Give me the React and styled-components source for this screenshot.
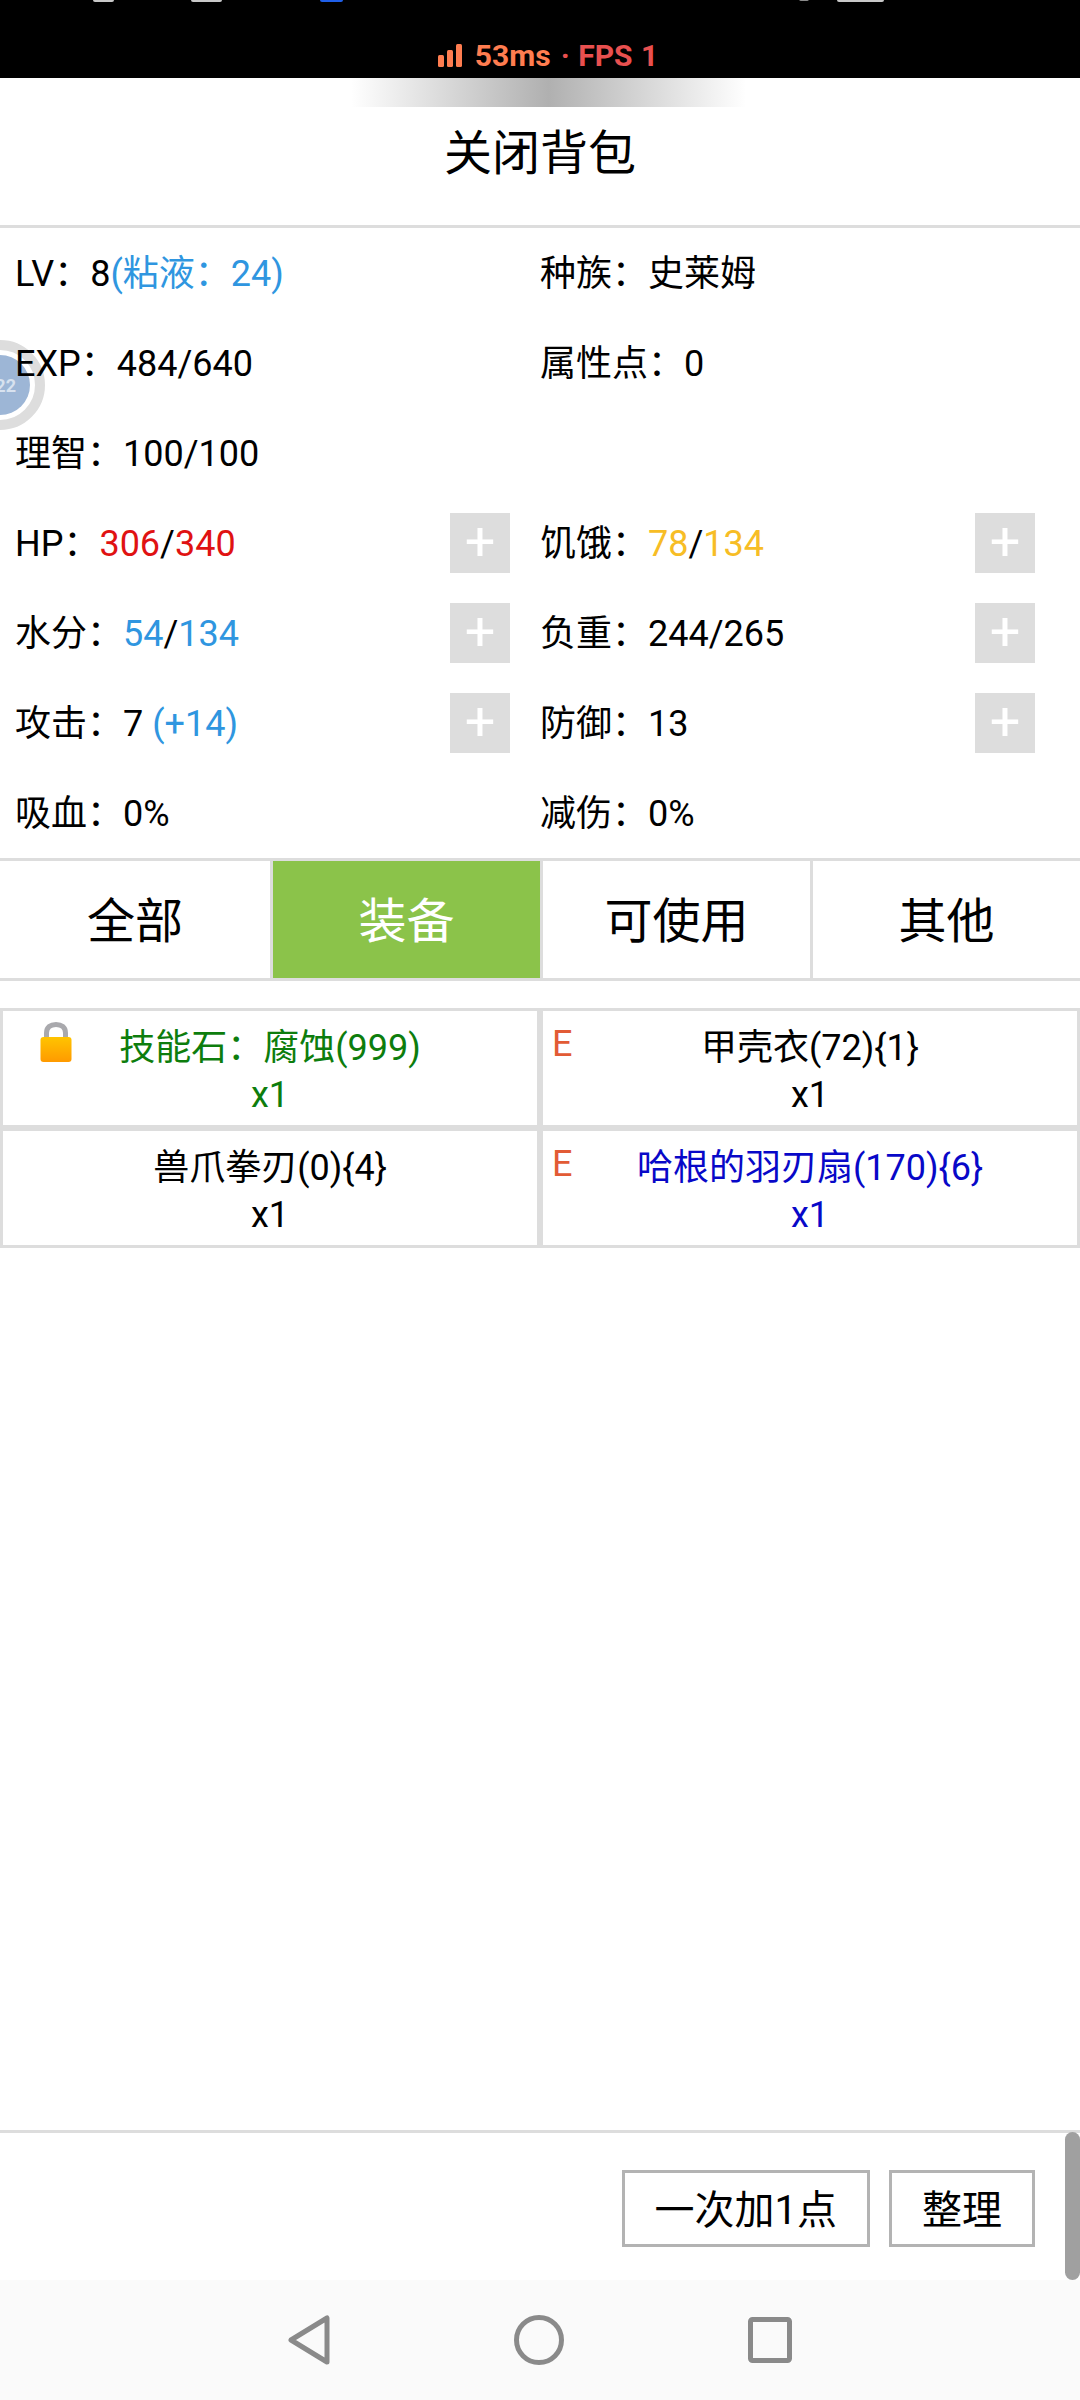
import React from "react";
import styled, { createGlobalStyle } from "styled-components";

const GlobalStyle = createGlobalStyle`
  html, body {
    margin: 0;
    padding: 0;
    background: #ffffff;
  }
  * {
    box-sizing: border-box;
  }
`;

const TONES = {
  blue: "#2f96e0",
  red: "#e01212",
  yellow: "#f7bd25",
};

const ITEM_TONES = {
  plain: "#000000",
  green: "#0d7d0d",
  navy: "#0808c8",
};

const Page = styled.div`
  position: relative;
  display: flex;
  flex-direction: column;
  width: 1080px;
  height: 2400px;
  overflow: hidden;
  background: #ffffff;
  color: #000000;
  font-family: Roboto, "Noto Sans CJK SC", sans-serif;
  font-size: 36px;
`;

const StatusBar = styled.div`
  position: relative;
  display: flex;
  align-items: flex-end;
  justify-content: center;
  height: 78px;
  padding: 0 0 8px 16px;
  background: #000000;
`;

const StatusSlivers = styled.svg`
  position: absolute;
  top: 0;
  left: 0;
  width: 1080px;
  height: 3px;
`;

const NetStatus = styled.div`
  display: flex;
  align-items: center;
  gap: 10px;
  height: 30px;
  font-size: 30px;
  font-weight: 700;
`;

const SignalIcon = styled.svg`
  width: 24px;
  height: 23px;
  margin-right: 3px;
  fill: #ff7d50;
`;

const Latency = styled.span`
  color: #ff7d50;
`;

const Fps = styled.span`
  color: #e8504f;
  word-spacing: 1px;
`;

const Header = styled.div`
  display: flex;
  flex-direction: column;
  align-items: center;
  height: 150px;
  border-bottom: 3px solid #dddddd;
`;

const HandleShade = styled.div`
  width: 395px;
  height: 29px;
  margin-left: 16px;
  background: linear-gradient(
    90deg,
    rgba(176, 176, 176, 0),
    #b0b0b0 50%,
    rgba(176, 176, 176, 0)
  );
`;

const Title = styled.div`
  margin-top: 19px;
  font-size: 48px;
  line-height: 56px;
`;

const FloatBall = styled.div`
  position: absolute;
  top: 340px;
  left: -45px;
  display: flex;
  align-items: center;
  justify-content: center;
  width: 90px;
  height: 90px;
  border: 10px solid #dddddd;
  border-radius: 50%;
  background: #ffffff;
`;

const BallCore = styled.div`
  display: flex;
  align-items: center;
  justify-content: flex-end;
  width: 60px;
  height: 60px;
  padding-right: 14px;
  border-radius: 50%;
  background: #9db6d6;
  color: #d8e2ef;
  font-size: 18px;
  font-weight: 700;
`;

const Stats = styled.div`
  position: relative;
  display: grid;
  grid-template-columns: 525px 555px;
  grid-auto-rows: 90px;
  height: 630px;
`;

const Stat = styled.div`
  display: flex;
  align-items: center;
  justify-content: space-between;
  padding-left: 15px;
  &:nth-child(even) {
    padding-right: 45px;
  }
  &:nth-child(odd) {
    padding-right: 15px;
  }
`;

const StatText = styled.span`
  margin-bottom: 6px;
`;

const Val = styled.span`
  color: ${(p) => TONES[p.$tone]};
`;

const PlusButton = styled.div`
  display: flex;
  align-items: center;
  justify-content: center;
  width: 60px;
  height: 60px;
  padding-bottom: 3px;
  background: #dddddd;
  color: #ffffff;
  font-size: 54px;
  font-weight: 400;
`;

const Tabs = styled.div`
  display: grid;
  grid-template-columns: repeat(4, 270px);
  height: 123px;
  border-top: 3px solid #dddddd;
  border-bottom: 3px solid #dddddd;
`;

const Tab = styled.div`
  display: flex;
  align-items: center;
  justify-content: center;
  padding-bottom: 6px;
  background: ${(p) => (p.$active ? "#8bc34a" : "#ffffff")};
  background-clip: padding-box;
  color: ${(p) => (p.$active ? "#ffffff" : "#000000")};
  font-size: 48px;
  &:not(:first-child) {
    border-left: 3px solid #dddddd;
  }
`;

const ItemGrid = styled.div`
  display: grid;
  grid-template-columns: repeat(2, 540px);
  grid-auto-rows: 120px;
  margin-top: 27px;
`;

const Item = styled.div`
  position: relative;
  padding-top: 14px;
  border: 3px solid #dddddd;
  color: ${(p) => ITEM_TONES[p.$tone]};
  line-height: 47px;
  text-align: center;
`;

const LockSvg = styled.svg`
  position: absolute;
  top: 11px;
  left: 37px;
  width: 32px;
  height: 40px;
`;

const EquipMark = styled.span`
  position: absolute;
  top: 10px;
  left: 9px;
  color: #e25b35;
  font-size: 36px;
  line-height: 46px;
`;

const Footer = styled.div`
  position: relative;
  display: flex;
  align-items: flex-start;
  justify-content: flex-end;
  gap: 19px;
  height: 150px;
  margin-top: auto;
  padding: 37px 45px 0 0;
  border-top: 3px solid #dddddd;
`;

const FooterButton = styled.div`
  display: flex;
  align-items: center;
  justify-content: center;
  height: 77px;
  padding: 0 30px 4px;
  border: 3px solid #b3b3b3;
  font-size: 40px;
`;

const ScrollThumb = styled.div`
  position: absolute;
  top: -1px;
  right: 0;
  width: 15px;
  height: 148px;
  border-radius: 8px;
  background: #a0a0a0;
`;

const NavBar = styled.div`
  display: flex;
  align-items: center;
  justify-content: center;
  gap: 184px;
  height: 120px;
  background: #fafafa;
`;

const NavIcon = styled.svg`
  fill: none;
  stroke: #8a8a8a;
  stroke-width: 5;
  stroke-linejoin: round;
`;

const stats = [
  { label: "LV：", value: <>8<Val $tone="blue">(粘液：24)</Val></> },
  { label: "种族：", value: "史莱姆" },
  { label: "EXP：", value: "484/640" },
  { label: "属性点：", value: "0" },
  { label: "理智：", value: "100/100" },
  {},
  {
    label: "HP：",
    value: <><Val $tone="red">306</Val>/<Val $tone="red">340</Val></>,
    plus: true,
  },
  {
    label: "饥饿：",
    value: <><Val $tone="yellow">78</Val>/<Val $tone="yellow">134</Val></>,
    plus: true,
  },
  {
    label: "水分：",
    value: <><Val $tone="blue">54</Val>/<Val $tone="blue">134</Val></>,
    plus: true,
  },
  { label: "负重：", value: "244/265", plus: true },
  { label: "攻击：", value: <>7 <Val $tone="blue">(+14)</Val></>, plus: true },
  { label: "防御：", value: "13", plus: true },
  { label: "吸血：", value: "0%" },
  { label: "减伤：", value: "0%" },
];

const tabs = ["全部", "装备", "可使用", "其他"];

const items = [
  { name: "技能石：腐蚀(999)", tone: "green", locked: true },
  { name: "甲壳衣(72){1}", tone: "plain", equipped: true },
  { name: "兽爪拳刃(0){4}", tone: "plain" },
  { name: "哈根的羽刃扇(170){6}", tone: "navy", equipped: true },
];

const LockIcon = () => (
  <LockSvg viewBox="0 0 32 40" aria-hidden="true">
    <defs>
      <linearGradient id="lockBody" x1="0" y1="0" x2="0" y2="1">
        <stop offset="0" stopColor="#ffc400" />
        <stop offset="1" stopColor="#ff9a00" />
      </linearGradient>
    </defs>
    <path
      d="M6.5 17V11C6.5 5 10.5 2.5 16 2.5S25.5 5 25.5 11V17"
      fill="none"
      stroke="#a9a9ad"
      strokeWidth="5"
    />
    <rect x="0.5" y="15" width="31" height="25" rx="3" fill="url(#lockBody)" />
  </LockSvg>
);

const App = () => {
  return (
    <Page lang="zh-CN">
      <GlobalStyle />
      <StatusBar>
        <StatusSlivers viewBox="0 0 1080 3" aria-hidden="true">
          <rect x="93" y="-3" width="21" height="5" rx="2" fill="#c8c8c8" />
          <rect x="191" y="-3" width="31" height="5" rx="2" fill="#c8c8c8" />
          <rect x="320" y="-3" width="23" height="5" rx="2" fill="#1f5fe8" />
          <rect x="799" y="-3" width="10" height="4" rx="2" fill="#8a8a8a" />
          <rect x="837" y="-3" width="47" height="5" rx="2" fill="#c8c8c8" />
        </StatusSlivers>
        <NetStatus>
          <SignalIcon viewBox="0 0 24 23" aria-hidden="true">
            <rect x="0" y="11" width="6" height="12" rx="1.5" />
            <rect x="9" y="6" width="6" height="17" rx="1.5" />
            <rect x="18" y="0" width="6" height="23" rx="1.5" />
          </SignalIcon>
          <Latency>53ms</Latency>
          <Fps>· FPS 1</Fps>
        </NetStatus>
      </StatusBar>

      <Header>
        <HandleShade />
        <Title>关闭背包</Title>
      </Header>

      <FloatBall>
        <BallCore>22</BallCore>
      </FloatBall>

      <Stats>
        {stats.map((stat, i) => (
          <Stat key={i}>
            <StatText>
              {stat.label}
              {stat.value}
            </StatText>
            {stat.plus && <PlusButton>+</PlusButton>}
          </Stat>
        ))}
      </Stats>

      <Tabs>
        {tabs.map((tab) => (
          <Tab key={tab} $active={tab === "装备"}>
            {tab}
          </Tab>
        ))}
      </Tabs>

      <ItemGrid>
        {items.map((item) => (
          <Item key={item.name} $tone={item.tone}>
            {item.locked && <LockIcon />}
            {item.equipped && <EquipMark>E</EquipMark>}
            <div>{item.name}</div>
            <div>x1</div>
          </Item>
        ))}
      </ItemGrid>

      <Footer>
        <FooterButton>一次加1点</FooterButton>
        <FooterButton>整理</FooterButton>
        <ScrollThumb />
      </Footer>

      <NavBar>
        <NavIcon width="42" height="50" viewBox="0 0 42 50">
          <path d="M39 3V47L3 25Z" />
        </NavIcon>
        <NavIcon width="50" height="50" viewBox="0 0 50 50">
          <circle cx="25" cy="25" r="22.5" />
        </NavIcon>
        <NavIcon width="44" height="46" viewBox="0 0 44 46">
          <rect x="2.5" y="2.5" width="39" height="41" rx="2" />
        </NavIcon>
      </NavBar>
    </Page>
  );
};

export default App;
